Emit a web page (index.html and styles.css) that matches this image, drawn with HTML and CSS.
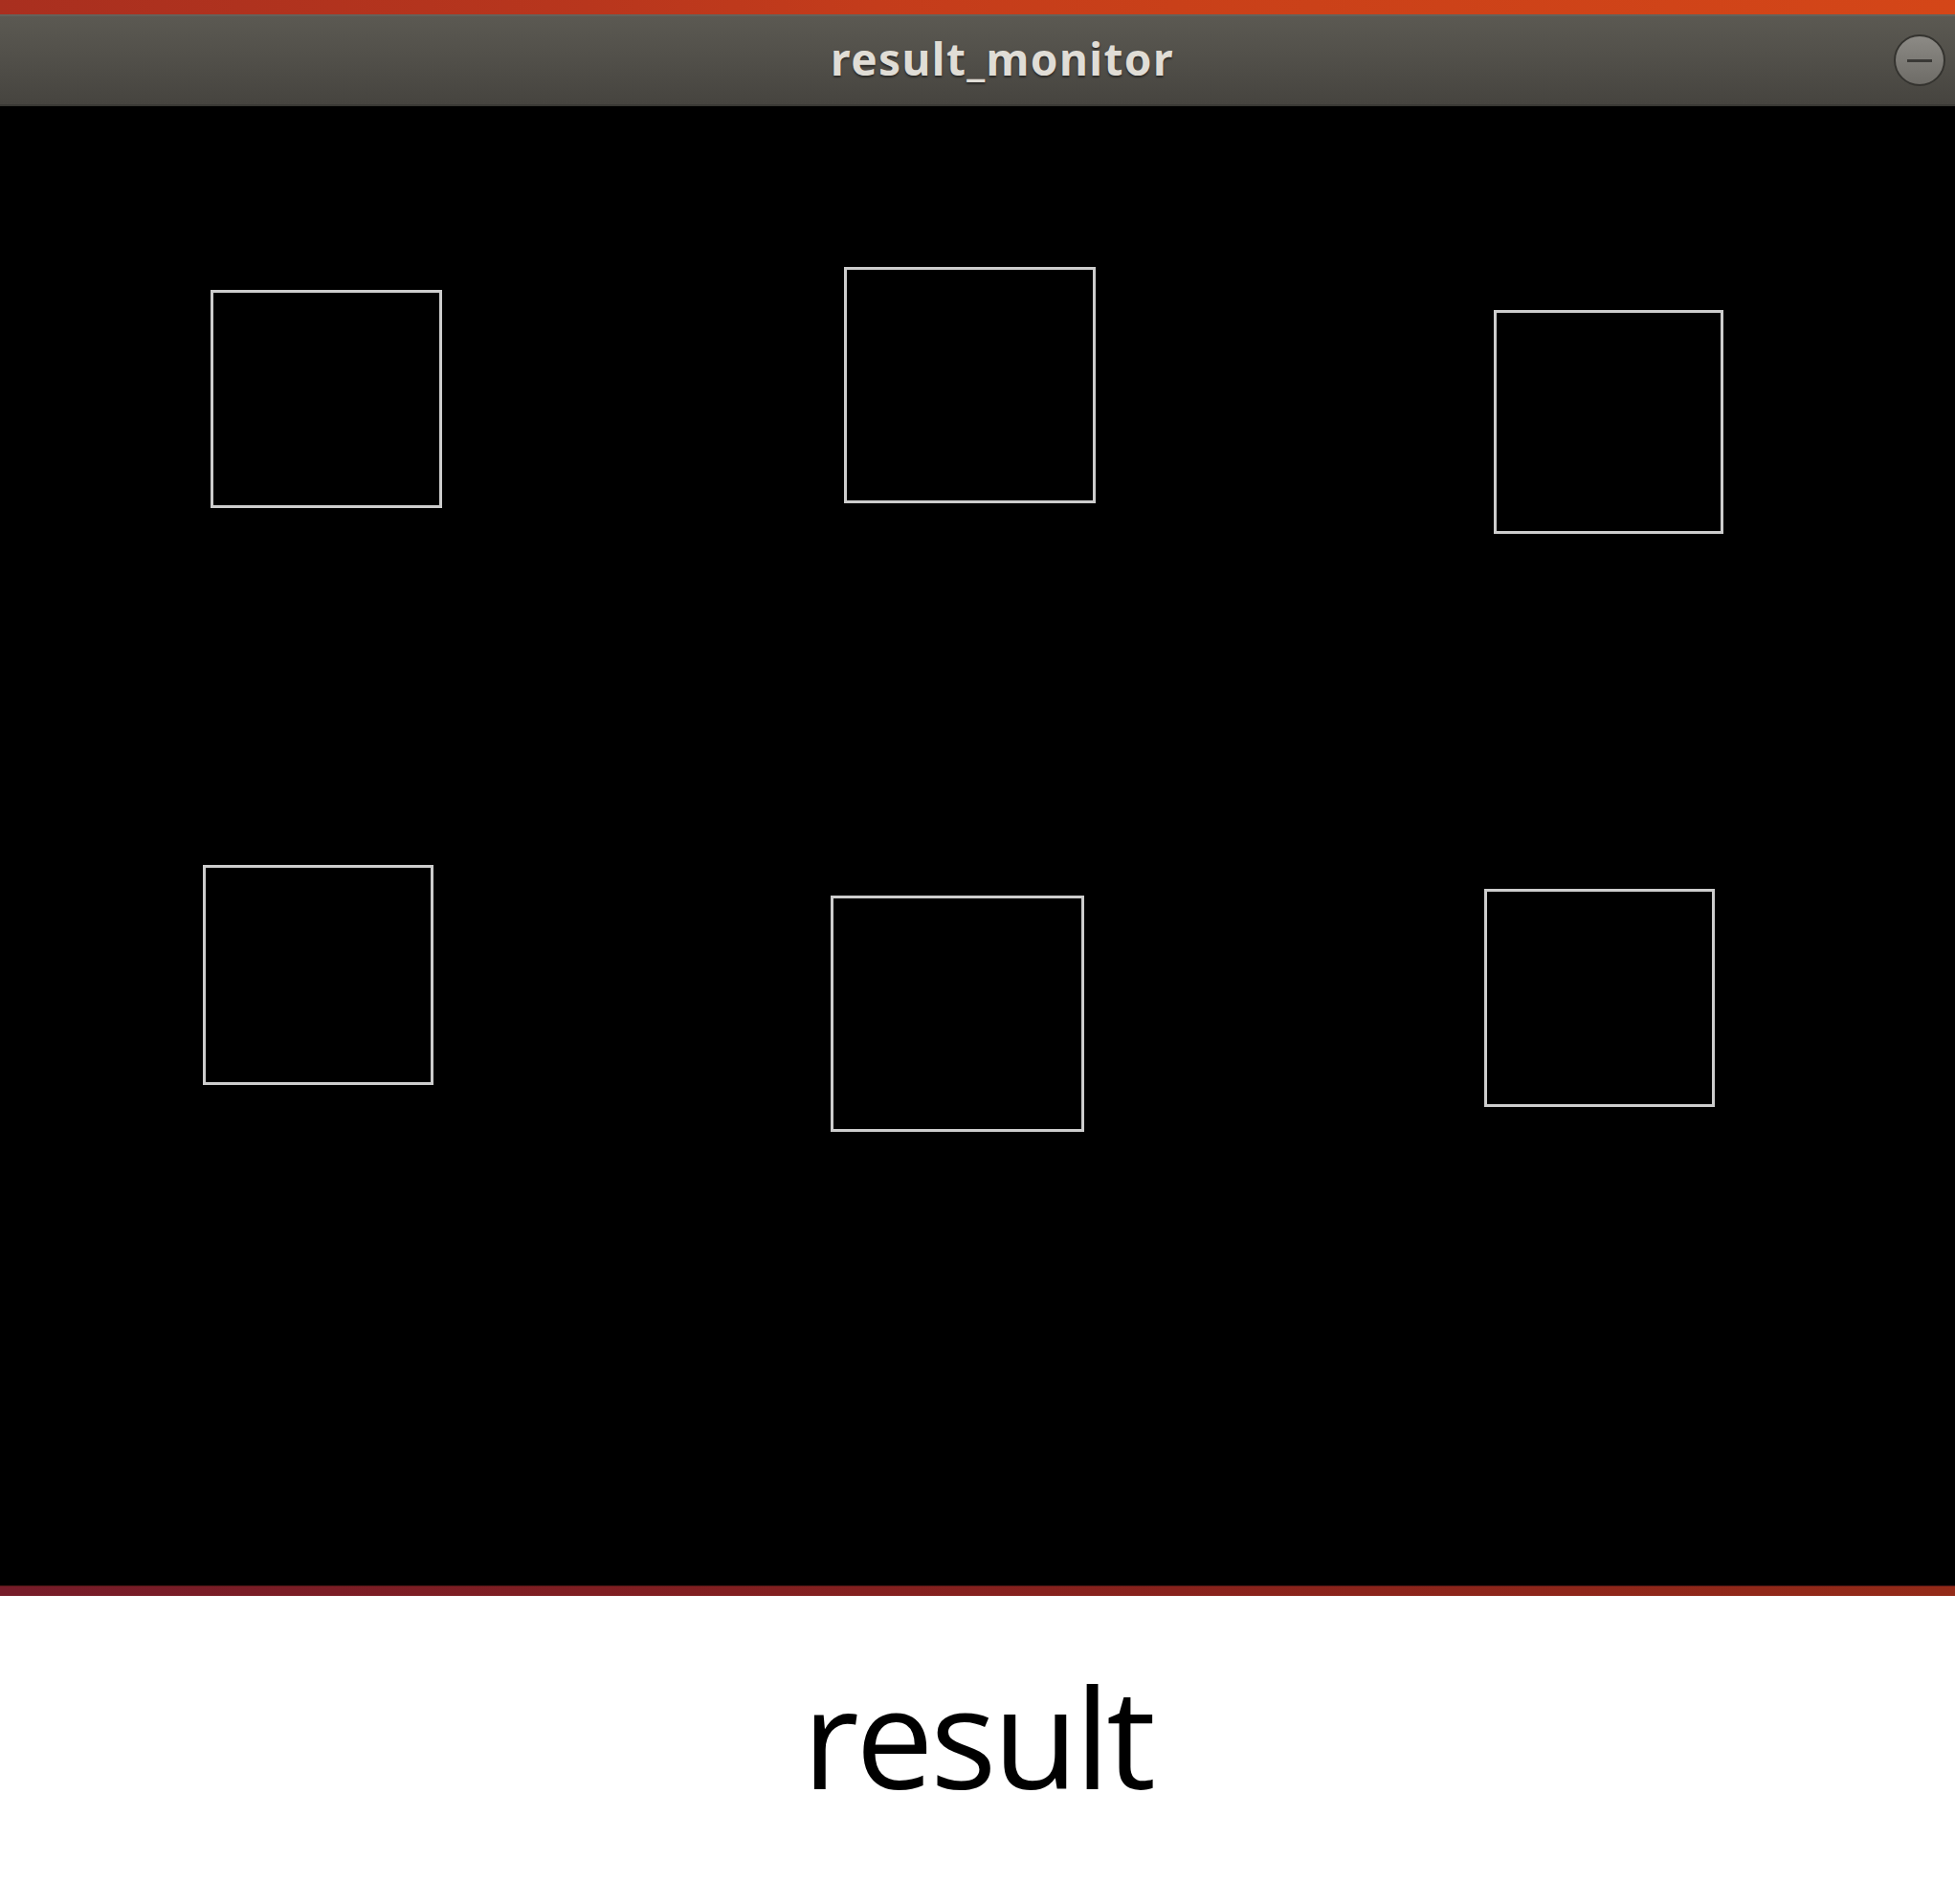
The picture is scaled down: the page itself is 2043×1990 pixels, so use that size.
FILE: index.html
```html
<!DOCTYPE html>
<html>
<head>
<meta charset="utf-8">
<title>result</title>
<link rel="stylesheet" href="styles.css">
</head>
<body>
<div class="window">
  <div class="topstrip"></div>
  <div class="titlebar">
    <span class="title">result_monitor</span>
    <span class="minbtn"><span class="dash"></span></span>
  </div>
  <div class="canvas">
    <svg class="boxes" width="2043" height="1546" viewBox="0 111 2043 1546">
      <g fill="none" stroke="#cdcdcd" stroke-width="3">
        <rect x="221.5" y="304.5" width="239" height="225"/>
        <rect x="883.5" y="280.5" width="260" height="244"/>
        <rect x="1562.5" y="325.5" width="237" height="231"/>
        <rect x="213.5" y="905.5" width="238" height="227"/>
        <rect x="869.5" y="937.5" width="262" height="244"/>
        <rect x="1552.5" y="930.5" width="238" height="225"/>
      </g>
    </svg>
  </div>
  <div class="botstrip"></div>
</div>
<div class="caption">result</div>
</body>
</html>
```
FILE: styles.css
```css
html, body {
  margin: 0;
  padding: 0;
  background: #ffffff;
}
body {
  width: 2043px;
  height: 1990px;
  overflow: hidden;
}
.window {
  display: flex;
  flex-direction: column;
}
.topstrip {
  height: 15px;
  background: linear-gradient(90deg, #a92f1f 0%, #b8361d 30%, #c43c1b 45%, #c94019 60%, #d44618 100%);
}
.titlebar {
  position: relative;
  height: 96px;
  box-sizing: border-box;
  border-top: 2px solid #64625b;
  border-bottom: 2px solid #393834;
  background: linear-gradient(180deg, #5b5952 0%, #52504a 45%, #46443f 100%);
  display: flex;
  align-items: center;
  justify-content: center;
}
.title {
  font-family: "Noto Sans", "DejaVu Sans", sans-serif;
  font-weight: 700;
  font-size: 46px;
  color: #e0ddd6;
  text-shadow: 0 2px 2px #2b2a27;
  letter-spacing: 1.4px;
  margin-top: -4px;
  margin-left: 52px;
}
.minbtn {
  position: absolute;
  right: 10px;
  top: 19px;
  width: 50px;
  height: 50px;
  border-radius: 50%;
  border: 2px solid #34332f;
  background: linear-gradient(180deg, #8c8a85 0%, #7a7873 60%, #6e6c67 100%);
  display: flex;
  align-items: center;
  justify-content: center;
}
.dash {
  display: block;
  width: 26px;
  height: 3px;
  background: #3a3936;
}
.canvas {
  height: 1546px;
  background: #000000;
}
.boxes {
  display: block;
}
.botstrip {
  height: 11px;
  box-sizing: border-box;
  border-top: 1px solid #4a1514;
  background: linear-gradient(90deg, #761c29 0%, #7f1e22 30%, #88221c 60%, #932a18 100%);
}
.caption {
  margin-top: 73px;
  text-align: center;
  font-family: "Open Sans", "Noto Sans", sans-serif;
  font-size: 145px;
  line-height: 1;
  letter-spacing: -3.5px;
  color: #000000;
}
```
